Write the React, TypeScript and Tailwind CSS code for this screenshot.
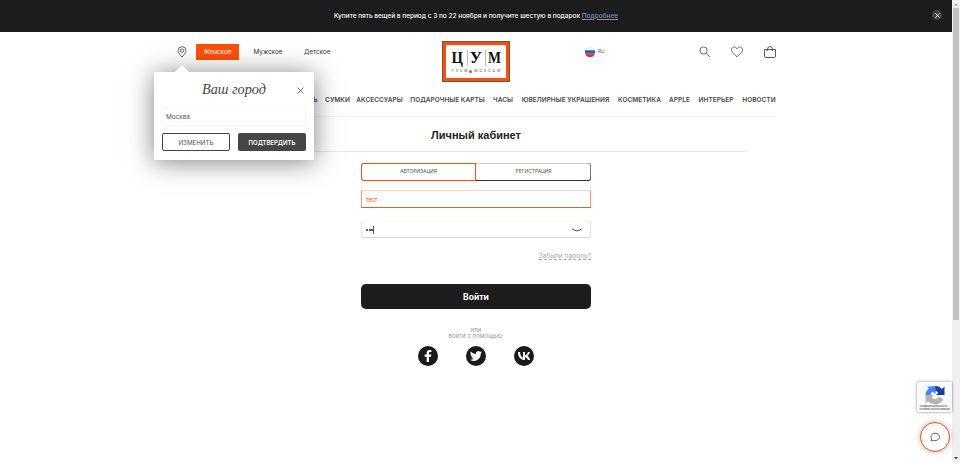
import React from 'react';

const NAV = [
  { label: 'ОБУВЬ', width: 'w-[23px]' },
  { label: 'СУМКИ', width: 'w-[23px]' },
  { label: 'АКСЕССУАРЫ', width: 'w-[45px]' },
  { label: 'ПОДАРОЧНЫЕ КАРТЫ', width: 'w-[75px]' },
  { label: 'ЧАСЫ', width: 'w-[20px]' },
  { label: 'ЮВЕЛИРНЫЕ УКРАШЕНИЯ', width: 'w-[89px]' },
  { label: 'КОСМЕТИКА', width: 'w-[43px]' },
  { label: 'APPLE', width: 'w-[21px]' },
  { label: 'ИНТЕРЬЕР', width: 'w-[36px]' },
  { label: 'НОВОСТИ', width: 'w-[34px]' },
];

function Promo() {
  return (
    <div className="relative flex h-8 items-center justify-center bg-[#1c1c1c] pt-px text-[6.5px] font-medium text-white">
      <p className="whitespace-nowrap">
        Купите пять вещей в период с 3 по 22 ноября и получите шестую в подарок{' '}
        <a className="text-[#8290a5] underline">Подробнее</a>
      </p>
      <button className="absolute right-[10px] top-[10px] flex size-[10px] items-center justify-center rounded-full bg-[#444547]">
        <svg className="size-[5px]" viewBox="0 0 5 5" stroke="#fff" strokeWidth="0.9">
          <path d="M.5.5l4 4M4.5.5l-4 4" />
        </svg>
      </button>
    </div>
  );
}

function Logo() {
  return (
    <div className="flex h-[41px] w-[68px] flex-col items-center border border-[#6c5548] bg-white outline-[3px] -outline-offset-4 outline-[#fa4f0b]">
      <div className="mt-[7px] flex h-[18px] items-center font-['Liberation_Serif',serif] text-[16px] leading-[18px] text-[#111]">
        <span className="flex w-[15px] justify-center"><span className="scale-x-[.92] font-bold">Ц</span></span>
        <i className="mx-[1.5px] h-4 w-px bg-[#bbb]" />
        <span className="flex w-[14px] justify-center"><span className="scale-x-[1.05] font-bold">У</span></span>
        <i className="mx-[1.5px] h-4 w-px bg-[#bbb]" />
        <span className="flex w-[15px] justify-center"><span className="scale-x-[.86] font-bold">М</span></span>
      </div>
      <div className="mt-[2px] flex w-[49px] items-center justify-between text-[3.5px] leading-[5px] text-[#444]">
        <span>T</span><span>S</span><span>U</span><span>M</span>
        <i className="size-[3px] rounded-full bg-[#fa4f0b]" />
        <span>M</span><span>O</span><span>S</span><span>C</span><span>O</span><span>W</span>
      </div>
    </div>
  );
}

function CityPopup() {
  return (
    <section className="absolute left-[154px] top-[72px] h-[88px] w-[160px] bg-white px-2 shadow-[0_2px_24px_rgba(0,0,0,0.5)]">
      <svg className="absolute -top-[7px] left-[21px] h-[7px] w-[14px]" viewBox="0 0 14 7">
        <path d="M0 7l7-7 7 7z" fill="#fff" />
      </svg>
      <div className="flex h-[35px] items-center pt-px">
        <h2 className="ml-[40px] w-[65px] whitespace-nowrap font-['Liberation_Serif',serif] text-[14.2px] italic text-[#444]">Ваш город</h2>
        <svg className="ml-[30px] size-[7px] shrink-0" viewBox="0 0 7 7" stroke="#555" strokeWidth="0.8">
          <path d="M.5.5l6 6M6.5.5l-6 6" />
        </svg>
      </div>
      <div className="flex h-[19px] items-center border border-[#f7f7f7] px-[3px] pt-[2px] text-[6.4px] text-[#555]">Москва</div>
      <div className="mt-[7px] flex gap-2">
        <button className="h-[18px] w-[68px] rounded-[2px] border border-[#444] pt-px text-[6.2px] text-[#555]">ИЗМЕНИТЬ</button>
        <button className="h-[18px] w-[68px] rounded-[2px] bg-[#464646] text-[6px] font-semibold text-white">ПОДТВЕРДИТЬ</button>
      </div>
    </section>
  );
}

function Header() {
  return (
    <header className="mx-auto h-[85px] w-[600px] border-b border-[#f3f3f3]">
      <div className="flex h-[56px] items-start">
        <svg className="ml-[1px] mt-[14px] h-3 w-[10px]" viewBox="0 0 10 12" fill="none" stroke="#444" strokeWidth="0.8">
          <path d="M5 11.2C3.8 9.4 1 7 1 4.7a4 4 0 018 0c0 2.300-2.800 4.700-4 6.500z" />
          <circle cx="5" cy="4.700" r="1.700" />
        </svg>
        <nav className="ml-[9px] mt-3 flex h-4 items-center text-[6.400px] text-[#333]">
          <a className="flex h-4 w-[43px] items-center justify-center bg-[#fa4f0b] pt-px text-white">Женское</a>
          <a className="ml-[14px] w-[30px] pt-px text-center">Мужское</a>
          <a className="ml-[21px] w-[29px] whitespace-nowrap pt-px">Детское</a>
        </nav>
        <div className="ml-[109px] mt-[9px]"><Logo /></div>
        <div className="ml-[75px] mt-[14px] flex h-3 items-center gap-[3px] text-[4.800px] text-[#666]">
          <svg className="size-[10px]" viewBox="0 0 10 10">
            <path d="M.2 3.300a5 5 0 019.600 0z" fill="#f5f5f5" />
            <path d="M.2 3.300h9.600a5 5 0 010 3.400H.2a5 5 0 010-3.400z" fill="#2f5fa8" />
            <path d="M.2 6.700h9.600a5 5 0 01-9.600 0z" fill="#dd3b43" />
          </svg>
          <span className="w-[9px]">RU</span>
        </div>
        <svg className="ml-[92px] mt-[14px] size-3" viewBox="0 0 12 12" fill="none" stroke="#444" strokeWidth="0.8">
          <circle cx="4.500" cy="4.500" r="3.600" />
          <path d="M7.200 7.200l3.800 3.800" />
        </svg>
        <svg className="ml-[20px] mt-[14px] size-3" viewBox="0 0 12 12" fill="none" stroke="#444" strokeWidth="0.8">
          <path d="M6 2.800C5 .6 2.300.5 1 2.200.1 3.700.5 5.300 1.700 6.500L6 10.800l4.300-4.300c1.200-1.200 1.600-2.800.7-4.300C9.700.5 7 .6 6 2.800z" />
        </svg>
        <svg className="ml-[21px] mt-[14px] h-3 w-[12px]" viewBox="0 0 12 12" fill="none" stroke="#333" strokeWidth="0.8">
          <path d="M.5 3.500h11V10.500q0 1-1 1h-9q-1 0-1-1zM3.500 5V3.500a2.500 3 0 015 0V5" />
        </svg>
      </div>
      <nav className="flex h-6 items-center justify-end gap-2 pt-[2px] text-[6.500px] font-semibold tracking-[0.03px] text-[#484848]">
        {NAV.map((n) => (
          <a key={n.label} className={'flex shrink-0 justify-center whitespace-nowrap ' + n.width}>{n.label}</a>
        ))}
      </nav>
    </header>
  );
}

function Social({ children }: { children: React.ReactNode }) {
  return (
    <a className="flex size-5 items-center justify-center rounded-full bg-[#1a1a1a]">
      <svg className="size-3" viewBox="0 0 24 24" fill="#fff">{children}</svg>
    </a>
  );
}

function Login() {
  return (
    <main>
      <h1 className="mx-auto flex h-[35px] w-[540px] items-center justify-center border-b border-[#e6e6e6] pt-[2px] font-['Liberation_Sans',sans-serif] text-[11px] font-bold text-[#222]">
        Личный кабинет
      </h1>
      <div className="mx-auto mt-[11px] w-[230px]">
        <div className="flex h-[18px] text-[4.900px] text-[#555]">
          <button className="w-[115px] rounded-l-[3px] shadow-[inset_0_0_0_1px_#fa4f0b]">АВТОРИЗАЦИЯ</button>
          <button className="w-[115px] rounded-r-[3px] shadow-[inset_0_-1px_0_0_#333,inset_-1px_0_0_0_#777,inset_0_1px_0_0_#ccc]">РЕГИСТРАЦИЯ</button>
        </div>
        <div className="mt-[9px] flex h-[18px] items-center rounded-[1px] px-[5px] pt-[3px] text-[5.500px] text-[#fa4f0b] shadow-[inset_0_-1px_0_0_#fa5a1b,inset_1px_0_0_0_#fa9a74,inset_-1px_0_0_0_#fa9a74,inset_0_1px_0_0_#fdd5c6]">тест</div>
        <div className="mt-3 flex h-[18px] items-center rounded-[1px] px-[5px] pt-px shadow-[inset_0_-1px_0_0_#d8d8d8,inset_1px_0_0_0_#e8e8e8,inset_-1px_0_0_0_#e8e8e8,inset_0_1px_0_0_#f8f8f8]">
          <span className="flex gap-[0.5px]">
            <i className="size-[2px] rounded-full bg-[#222]" />
            <i className="size-[2px] rounded-full bg-[#222]" />
            <i className="size-[2px] rounded-full bg-[#222]" />
          </span>
          <i className="h-2 w-px bg-[#555]" />
          <svg className="ml-auto mr-1 h-1 w-[10px]" viewBox="0 0 10 4" fill="none" stroke="#333" strokeWidth="0.9">
            <path d="M.3.7Q5 5 9.700.7M1.500 1.500L.7 2.300M8.500 1.500l.8.800" />
          </svg>
        </div>
        <div className="mt-[14px] flex h-2 justify-end">
          <a className="h-2 whitespace-nowrap border-b border-dashed border-[#a5a5ab] pt-px text-[6.600px] leading-[7px] text-[#aaa]">Забыли пароль?</a>
        </div>
        <button className="mt-6 flex h-[25px] w-full items-center justify-center rounded-[5px] bg-[#1c1c1c] pt-[2px] text-[8.500px] font-bold text-white">Войти</button>
        <p className="mt-[18px] text-center text-[6.100px] leading-[6px] text-[#999]">
          или<br />войти с помощью:
        </p>
        <div className="mt-[7px] flex justify-center gap-7">
          <Social>
            <path d="M14 24V13.500h4l.7-4.500H14V6.500c0-1.500.6-2.300 2.400-2.300h2.400V.4C18 .2 16.800 0 15.200 0 11.600 0 9.300 2.200 9.300 6v3H5.300v4.500h4V24z" />
          </Social>
          <Social>
            <path d="M24 4.600a10 10 0 01-2.800.8 5 5 0 002.100-2.700 10 10 0 01-3.100 1.200 4.900 4.900 0 00-8.400 4.500A14 14 0 011.700 3.200a4.900 4.900 0 001.500 6.500 5 5 0 01-2.200-.6 4.900 4.900 0 004 4.900 5 5 0 01-2.300.1 4.900 4.900 0 004.600 3.400A10 10 0 010 19.500a14 14 0 0021.500-12.400A10 10 0 0024 4.600z" />
          </Social>
          <Social>
            <path d="M13.100 20C4.900 20 .3 14.300 0 4h4.100c.2 7.500 3.500 10.700 6 11.400V4h4v6.500c2.400-.3 4.900-3.200 5.800-6.500h3.900c-.6 3.700-3.300 6.600-5.200 7.700 1.900.9 4.600 3.200 5.400 8.300h-4.200c-.8-2.900-3-5.200-5.700-5.500V20z" />
          </Social>
        </div>
      </div>
    </main>
  );
}

function Widgets() {
  return (
    <>
      <div className="absolute right-0 top-[382px] flex h-[30px] w-[35px] flex-col items-center overflow-hidden rounded-l-[2px] bg-[#fafafa] pt-[3px] shadow-[0_0_3px_rgba(0,0,0,0.5)]">
        <svg className="h-5 w-5 shrink-0" viewBox="0 0 20 20" fill="none" strokeWidth="5">
          <path d="M3 10.500A7 7 0 0110 3.500" stroke="#4285f4" />
          <path d="M10 3.500a7 7 0 016 3.500" stroke="#1c3aa9" />
          <path d="M19.500 1.500v8.500h-8.500z" fill="#1c3aa9" />
          <path d="M3.200 11a7 7 0 0013 2" stroke="#b3b3b3" />
          <path d="M.5 18.500V10h8.500z" fill="#b3b3b3" />
          <path d="M2 1.500h8.500V9z" fill="#4285f4" />
        </svg>
        <p className="w-[35px] whitespace-nowrap text-center text-[2.600px] leading-[3px] text-[#333]">
          Конфиденциальность -<br />Условия использования
        </p>
      </div>
      <button className="absolute right-[2px] top-[422px] flex size-[30px] items-center justify-center rounded-full border-[1.500px] border-[#fa4f0b] bg-white shadow-[0_0_6px_rgba(0,0,0,0.25)]">
        <svg className="size-[10px]" viewBox="0 0 10 10" fill="none" stroke="#444" strokeWidth="0.8">
          <path d="M1 8.800l.7-2C-.1 4 1.900 1.200 5 1.200c6 0 5.800 7.400 0 7.400z" />
        </svg>
      </button>
    </>
  );
}

export default function App() {
  return (
    <div className="flex h-[462px] w-[960px] overflow-hidden bg-white font-[Inter,sans-serif]">
      <div className="relative w-[952px]">
        <Promo />
        <Header />
        <Login />
        <CityPopup />
        <Widgets />
      </div>
      <div className="flex w-2 flex-col items-center bg-[#f0f0f0]">
        <svg className="h-2 w-2" viewBox="0 0 8 8"><path d="M2 5.500l2-2 2 2z" fill="#999" /></svg>
        <div className="h-[312px] w-[6px] bg-[#c1c1c1]" />
        <svg className="mt-auto h-2 w-2" viewBox="0 0 8 8"><path d="M2 3l2 2.500L6 3z" fill="#444" /></svg>
      </div>
    </div>
  );
}
